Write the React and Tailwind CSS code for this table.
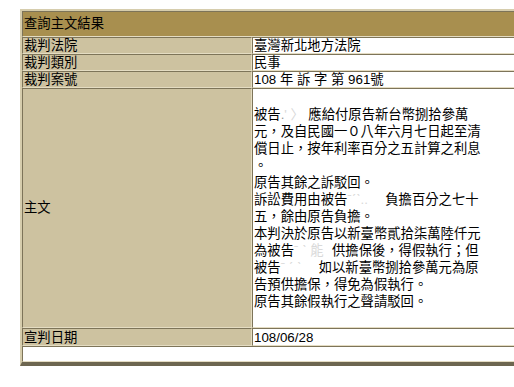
// App.jsx
import React from "react";

const font = "font-['Liberation_Sans','Noto_Sans_CJK_TC',sans-serif]";

const cell =
	"border border-t-[#7d7459] border-l-[#7d7459] border-b-[#e4dcc2] border-r-[#e4dcc2]";

const Faint = ({ w, children }) => (
	<span className={`inline-block text-[#d9d9d9] ${w}`}>{children}</span>
);

const rows = [
	{ label: "裁判法院", value: "臺灣新北地方法院" },
	{ label: "裁判類別", value: "民事" },
	{ label: "裁判案號", value: "108 年 訴 字 第 961號" },
];

const App = () => {
	return (
		<div className={`w-[514px] h-[387px] overflow-hidden bg-white text-black text-[13.33px] ${font}`}>
			<div className="ml-[20px] mt-[9px] w-[520px] bg-[#cdc2a0] border-t-2 border-l-2 border-t-[#d6cdad] border-l-[#d6cdad] border-b-4 border-r-4 border-b-[#6d6650] border-r-[#6d6650]">
				<div className="grid grid-cols-[230px_1fr]">
					<div className={`col-span-2 h-[26px] bg-[#a88f4f] flex items-center pl-[1px] ${cell}`}>查詢主文結果</div>

					{rows.map((r) => (
						<React.Fragment key={r.label}>
							<div className={`h-[17px] flex items-center pl-[1px] leading-[15px] ${cell}`}>{r.label}</div>
							<div className={`h-[17px] flex items-center pl-[1px] leading-[15px] bg-white ${cell}`}>{r.value}</div>
						</React.Fragment>
					))}

					<div className={`flex items-center pl-[1px] ${cell}`}>主文</div>
					<div className={`bg-white pl-[1px] py-[17px] leading-[17px] whitespace-nowrap ${cell}`}>
						<div>
							被告<span className="text-[#999]">.</span>
							<Faint w="w-[24px]">' 〉</Faint>應給付原告新台幣捌拾參萬
						</div>
						<div>元，及自民國一０八年六月七日起至清</div>
						<div>償日止，按年利率百分之五計算之利息</div>
						<div>。</div>
						<div>原告其餘之訴駁回。</div>
						<div>
							訴訟費用由被告<Faint w="w-[38px]">ˉˊˋ..</Faint>負擔百分之七十
						</div>
						<div>五，餘由原告負擔。</div>
						<div>本判決於原告以新臺幣貳拾柒萬陸仟元</div>
						<div>
							為被告<Faint w="w-[38px]">ˉ ˋ 能</Faint>供擔保後，得假執行；但
						</div>
						<div>
							被告<Faint w="w-[38px]">ˉ ˊ ˋ</Faint>如以新臺幣捌拾參萬元為原
						</div>
						<div>告預供擔保，得免為假執行。</div>
						<div>原告其餘假執行之聲請駁回。</div>
					</div>

					<div className={`h-[18px] flex items-center pl-[1px] leading-[15px] ${cell}`}>宣判日期</div>
					<div className={`h-[18px] flex items-center pl-[1px] leading-[15px] bg-white ${cell}`}>108/06/28</div>

					<div className={`col-span-2 h-[16px] bg-white ${cell}`}></div>
				</div>
			</div>
		</div>
	);
};

export default App;
